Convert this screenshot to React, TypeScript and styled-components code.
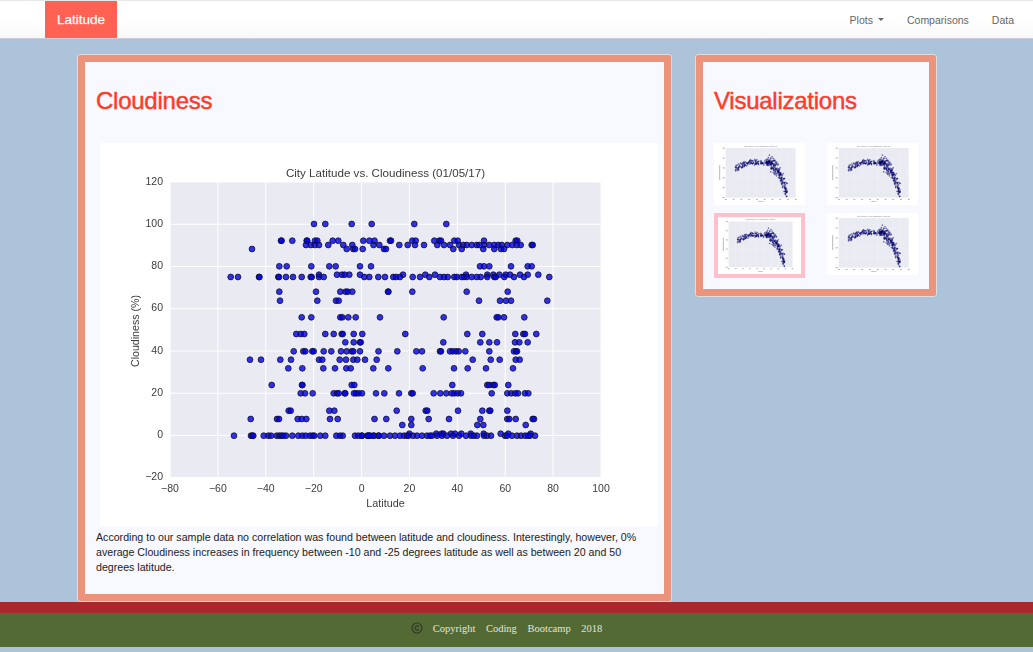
import styled, { createGlobalStyle } from "styled-components";
import { Copyright } from "lucide-react";

const GlobalStyle = createGlobalStyle`
  html, body {
    margin: 0;
    background: #adc3da;
    font-family: "Liberation Sans", Arial, sans-serif;
    color: #333;
  }
`;

const Navbar = styled.nav`
  height: 37px;
  display: flex;
  justify-content: space-between;
  padding: 0 19px 0 45px;
  background: linear-gradient(to bottom, #fff 0%, #fff 50%, #f8f8f8 100%);
  border-top: 1px solid #e7e7e7;
  border-bottom: 1px solid #ccd;
`;

const Brand = styled.a`
  width: 72px;
  display: flex;
  align-items: center;
  justify-content: center;
  background: #ff6153;
  color: #fff;
  font-size: 13.5px;
  -webkit-text-stroke: 0.25px #fff;
`;

const NavLinks = styled.div`
  display: flex;
  align-items: center;
  gap: 23px;
  font-size: 10.5px;
  color: #777;
`;

const NavLink = styled.a`
  display: flex;
  align-items: center;
  gap: 5px;
  color: #666;
`;

const Caret = styled.span`
  width: 0;
  height: 0;
  border-top: 3px solid #666;
  border-left: 3px solid transparent;
  border-right: 3px solid transparent;
`;

const Main = styled.main`
  display: flex;
  align-items: flex-start;
  gap: 23px;
  padding: 15px 0 0 77px;
`;

const Panel = styled.section<{ $width: number }>`
  width: ${(p) => p.$width}px;
  box-sizing: border-box;
  border: 1px solid #ddd;
  border-radius: 3px;
  background: #ec937c;
  padding: 7px;
`;

const PanelBody = styled.div`
  background: #f8f8ff;
  padding: 26px 11px 11px;
`;

const Title = styled.h2`
  margin: 0 0 29px;
  font-size: 24px;
  line-height: 26px;
  font-weight: 500;
  letter-spacing: -0.25px;
  color: #ff3b28;
  -webkit-text-stroke: 0.45px #ff3b28;
`;

const BigChart = styled.svg`
  display: block;
  margin-left: 4px;
  width: 558px;
  height: 383px;
  background: #fff;
  filter: blur(0.25px);
`;

const Description = styled.p`
  margin: 4px 0 8px;
  font-size: 10.64px;
  line-height: 15px;
  color: #222;
`;

const ThumbGrid = styled.div`
  display: grid;
  grid-template-columns: 91px 91px;
  justify-content: space-between;
  align-items: start;
  row-gap: 8px;
`;

const Thumb = styled.a<{ $selected?: boolean }>`
  display: block;
  background: #fff;
  border: ${(p) => (p.$selected ? "4px solid #ffc0cb" : "none")};
  width: ${(p) => (p.$selected ? 83 : 91)}px;
  height: ${(p) => (p.$selected ? 57 : 62)}px;
  svg {
    display: block;
    width: 100%;
    height: 100%;
    filter: blur(0.45px);
  }
`;

const Footer = styled.footer`
  border-top: 11px solid #a8282e;
  height: 34px;
  box-sizing: content-box;
  background: #546a35;
  display: flex;
  align-items: center;
  justify-content: center;
  gap: 10px;
  padding-right: 20px;
  font-family: "Liberation Serif", "Times New Roman", serif;
  font-size: 10.5px;
  word-spacing: 8px;
  color: #e4e4dc;
`;

const FooterText = styled.span`
  margin-top: -3px;
`;

const CopyMark = styled(Copyright)`
  color: #2f3a2a;
  margin-top: -5px;
`;

const Rest = styled.div`
  height: 5px;
`;

// cloudiness rows read off the plot: [y, ...x] in page pixels
const rows: number[][] = [
  [224, 314, 325.3, 351.7, 371.7, 414.3, 446.3],
  [240.7, 281, 281.6, 292.3, 306.7, 307.2, 315, 317.3, 332.7, 338.3, 363.3, 369.3, 374.5, 390, 391, 412.3, 415.7, 434.3, 439.3, 441, 454.3, 457.7, 484, 515.7, 517.3],
  [245, 306, 310.7, 314.7, 319, 328.3, 343.3, 352.3, 373.5, 379.3, 399.3, 407.7, 415, 424, 437.3, 444, 450, 459, 463.3, 466.7, 471.7, 476.7, 479.3, 484, 489.3, 494.3, 498.3, 501.7, 507.3, 512.3, 516.7, 520.7, 531.7, 532.7],
  [249, 252, 346.7, 353.3, 355, 362.7, 384, 386, 453.3, 461.7, 483.3, 494.3, 501, 504],
  [266.3, 279.3, 286.7, 311.3, 329.3, 335.7, 360, 371, 480, 484, 489.3, 511, 527.7, 531.7],
  [274.7, 319, 337, 342, 344.7, 349.3, 360, 403, 425.3, 435, 466, 487.3, 493.3, 499.3, 505.7, 510, 520, 527.7, 538.3],
  [277, 230.7, 238, 259, 259.4, 278.3, 279, 286, 293, 301.7, 310.7, 311.7, 319, 323.7, 364.3, 369.3, 378.3, 385, 393.3, 396, 400, 412.7, 420, 429.3, 440, 444, 447.7, 454.3, 456.7, 461.7, 464, 466.7, 471.7, 476.7, 480.7, 487.3, 494.3, 495.7, 504.3, 514, 524, 549.3],
  [291.7, 279.3, 316, 340.3, 345.7, 347.7, 352.3, 388, 388.4, 412.3, 466.7, 507.7],
  [300.7, 280, 317.3, 336, 338.7, 479, 500, 506, 511, 547.3],
  [317.3, 301.7, 311.3, 340.3, 342.3, 348.3, 355.7, 380, 443.7, 496.7, 498.3, 504, 524.3],
  [334, 296.3, 300.7, 304.3, 325.3, 333.7, 341.7, 342.7, 353.7, 362.3, 405.3, 467.3, 482.3, 515.3, 523.3, 525, 536.3],
  [342.3, 345.3, 353.7, 360, 360.7, 443.3, 480.3, 489.3, 497, 515, 519.3, 527.7],
  [351.3, 293.7, 303.3, 305.3, 312.3, 313.7, 323.7, 331.3, 341, 346.7, 351.7, 353.3, 360, 378.5, 397.3, 416.3, 422, 440, 441, 450, 452.7, 456, 458.7, 465.3, 489.3, 514, 516, 517],
  [359.7, 250, 261, 280.3, 291, 319, 322.3, 339.7, 346, 353.3, 357.3, 365, 376.7, 472.7, 490.7, 499.7, 515.7, 519.7],
  [368.3, 288.3, 302.3, 323.3, 335, 346.3, 350.7, 373.3, 388.3, 422.7, 454, 467.7, 486, 513],
  [385, 271.7, 302, 302.4, 351.7, 354.3, 452.3, 487.3, 489.3, 493.3, 494.7, 508.3],
  [393.3, 300.7, 305, 312.7, 333.7, 337, 338.7, 344.7, 345.3, 354, 356, 358.7, 362, 376, 384.3, 399, 411.3, 412.7, 433.7, 440.3, 446.3, 451.7, 454.3, 457.7, 461, 491.7, 507.3, 511.3, 515.3, 518, 525, 528.3],
  [410.7, 288.7, 290.7, 329.3, 334.3, 396.7, 425.7, 427.3, 458, 482.3, 489.3, 490.3, 507.3],
  [419, 250.7, 277, 279, 297.7, 301.7, 306.3, 330, 337.7, 374.5, 386.3, 411.3, 428.7, 449, 480.3, 507.3, 509.3, 515.7, 532.7, 534],
  [425, 402.3, 411.3, 477.3, 483.3, 525.7],
  [433.7, 409.3, 436.3, 441.7, 443.3, 451, 455, 461.3, 470.7, 483.7, 500.7, 508.3, 530.7],
  [435.7, 234, 251, 252.3, 253.3, 263.7, 268.3, 271, 276.7, 279.3, 281.3, 283.3, 286, 292.3, 298.3, 302.3, 305.7, 310, 312.7, 314.3, 320.3, 325.3, 336.3, 340, 342.7, 355, 358.3, 361.7, 367.3, 369.3, 373.3, 378.3, 362, 368, 370, 374, 379, 384, 390, 395, 400, 404, 407, 408.5, 413, 417, 422, 427, 430, 432, 437, 442, 447, 453, 459, 466, 471, 474, 477, 484, 487, 491, 505, 507, 512, 517, 521, 525, 528, 530, 535],
];

const xTicks = [-80, -60, -40, -20, 0, 20, 40, 60, 80, 100];
const yTicks = [120, 100, 80, 60, 40, 20, 0, -20];
const tickX = (i: number) => 170 + i * 47.89;
const tickY = (i: number) => 182 + i * 42.24;

function CloudinessChart() {
  return (
    <BigChart viewBox="100 143 558 383" fontFamily="Liberation Sans, Arial, sans-serif" fontSize="10.5" fill="#3c3c3c">
      <rect x="170" y="182" width="431" height="295.7" fill="#eaeaf2" />
      {xTicks.map((t, i) => (
        <g key={t}>
          <line x1={tickX(i)} x2={tickX(i)} y1="182" y2="477.7" stroke="#fff" strokeWidth="1" />
          <text x={tickX(i)} y="492" textAnchor="middle">{String(t).replace("-", "\u2212")}</text>
        </g>
      ))}
      {yTicks.map((t, i) => (
        <g key={t}>
          <line x1="170" x2="601" y1={tickY(i)} y2={tickY(i)} stroke="#fff" strokeWidth="1" />
          <text x="163" y={tickY(i) + 2.75} textAnchor="end">{String(t).replace("-", "\u2212")}</text>
        </g>
      ))}
      {rows.map(([y, ...xs]) =>
        xs.map((x, i) => (
          <circle key={`${y}-${i}`} cx={x} cy={y} r="2.9" fill="rgba(0,0,235,0.8)" stroke="#101030" strokeWidth="0.8" />
        ))
      )}
      <text x="385.5" y="176.5" textAnchor="middle" fontSize="11.6">City Latitude vs. Cloudiness (01/05/17)</text>
      <text x="385.5" y="507" textAnchor="middle" fontSize="10.8">Latitude</text>
      <text transform="translate(138.5 331) rotate(-90)" textAnchor="middle" fontSize="10.6">Cloudiness (%)</text>
    </BigChart>
  );
}

// small scatter in the thumbnails, same points in each
let seed = 7;
const rand = () => {
  seed = (seed * 16807) % 2147483647;
  return seed / 2147483647;
};
const curveY = (x: number) => {
  const t = (x - 138) / 80;
  return 57 + 10 * t * t + (x > 160 ? ((x - 160) * (x - 160)) / 45 : 0) + (x < 100 ? (100 - x) * 0.3 : 0);
};
const thumbDots = Array.from({ length: 340 }, () => {
  const r = rand();
  const x = 64 + 156 * (r < 0.4 ? 0.6 + 0.4 * rand() : rand());
  const spread = x > 170 ? 26 : 10;
  const stray = rand() < 0.08 ? -16 * rand() : 0;
  return { x, y: curveY(x) + (rand() + rand() - 1) * spread + stray };
});

function ThumbPlot() {
  return (
    <svg viewBox="0 0 273 184" preserveAspectRatio="none">
      <rect x="35" y="15" width="210" height="147" fill="#eaeaf2" />
      {[1, 2, 3, 4, 5, 6, 7, 8].map((i) => (
        <line key={i} x1={35 + i * 23.3} x2={35 + i * 23.3} y1="15" y2="162" stroke="#fff" strokeOpacity="0.6" strokeWidth="1" />
      ))}
      {[1, 2, 3, 4].map((i) => (
        <line key={i} x1="35" x2="245" y1={15 + i * 29.4} y2={15 + i * 29.4} stroke="#fff" strokeOpacity="0.6" strokeWidth="1" />
      ))}
      {thumbDots.map((d, i) => (
        <circle key={i} cx={d.x} cy={d.y} r="2" fill="rgba(0,0,130,0.5)" stroke="#101060" strokeWidth="0.5" />
      ))}
      <text x="140" y="11" textAnchor="middle" fontSize="5" fill="#777" fontFamily="Liberation Sans, sans-serif">
        City Latitude vs. Max Temperature (01/05/17)
      </text>
      <text x="140" y="176" textAnchor="middle" fontSize="5" fill="#777" fontFamily="Liberation Sans, sans-serif">
        Latitude
      </text>
      {[0, 1, 2, 3, 4, 5, 6, 7, 8, 9].map((i) => (
        <rect key={i} x={33 + i * 23.3} y="166" width="5" height="2.5" fill="#999" />
      ))}
      {[0, 1, 2, 3, 4, 5].map((i) => (
        <rect key={i} x="26" y={14 + i * 29.4} width="6" height="2.5" fill="#999" />
      ))}
      <rect x="16" y="66" width="2.5" height="44" fill="#aaa" />
    </svg>
  );
}

export default function App() {
  return (
    <>
      <GlobalStyle />
      <Navbar>
        <Brand>Latitude</Brand>
        <NavLinks>
          <NavLink>Plots <Caret /></NavLink>
          <NavLink>Comparisons</NavLink>
          <NavLink>Data</NavLink>
        </NavLinks>
      </Navbar>
      <Main>
        <Panel $width={595}>
          <PanelBody>
            <Title>Cloudiness</Title>
            <CloudinessChart />
            <Description>
              According to our sample data no correlation was found between latitude and cloudiness. Interestingly, however, 0% average Cloudiness increases in frequency between -10 and -25 degrees latitude as well as between 20 and 50 degrees latitude.
            </Description>
          </PanelBody>
        </Panel>
        <Panel $width={242}>
          <PanelBody>
            <Title>Visualizations</Title>
            <ThumbGrid>
              <Thumb><ThumbPlot /></Thumb>
              <Thumb><ThumbPlot /></Thumb>
              <Thumb $selected><ThumbPlot /></Thumb>
              <Thumb><ThumbPlot /></Thumb>
            </ThumbGrid>
          </PanelBody>
        </Panel>
      </Main>
      <Footer>
        <CopyMark size={12} strokeWidth={2.4} />
        <FooterText>Copyright Coding Bootcamp 2018</FooterText>
      </Footer>
      <Rest />
    </>
  );
}
